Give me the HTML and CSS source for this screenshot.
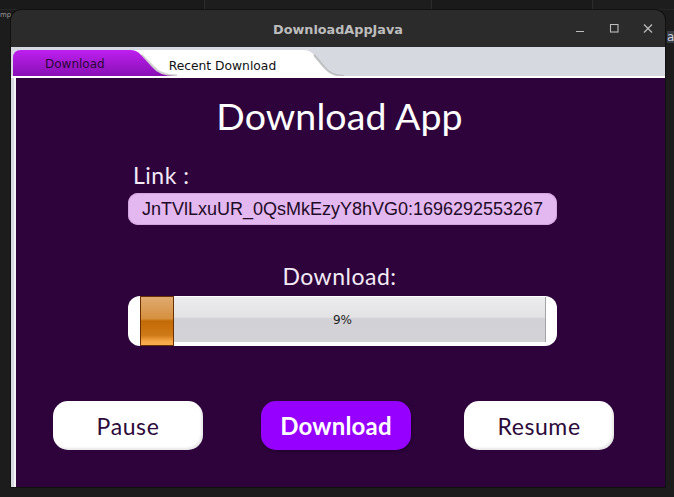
FILE: index.html
```html
<!DOCTYPE html>
<html>
<head>
<meta charset="utf-8">
<link rel="stylesheet" href="styles.css">
</head>
<body>
<div class="topstrip">
  <div class="seg seg1"></div>
  <div class="seg seg2"></div>
  <div class="seg seg3"></div>
  <div class="seg seg4"></div>
</div>
<div class="desk">
  <div class="left-edge"><span class="frag">mp</span></div>
  <div class="window">
    <div class="titlebar">
      <div></div>
      <div class="wtitle">DownloadAppJava</div>
      <div class="controls">
        <div class="ctl"><svg width="10" height="10" viewBox="0 0 10 10"><line x1="1" y1="7.5" x2="9" y2="7.5" stroke="#bdbdbd" stroke-width="1.2"/></svg></div>
        <div class="ctl"><svg width="10" height="10" viewBox="0 0 10 10"><rect x="1.5" y="0.5" width="7.5" height="7.5" fill="none" stroke="#bdbdbd" stroke-width="1.1"/></svg></div>
        <div class="ctl"><svg width="10" height="10" viewBox="0 0 10 10"><path d="M1 0.5 L9 8.5 M9 0.5 L1 8.5" stroke="#bdbdbd" stroke-width="1.2"/></svg></div>
      </div>
    </div>
    <div class="tabbar">
      <svg class="tabshapes" width="654" height="29" viewBox="0 0 654 29">
        <defs>
          <linearGradient id="pg" x1="0" y1="0" x2="0" y2="1">
            <stop offset="0" stop-color="#be1ff0"/>
            <stop offset="1" stop-color="#8810b4"/>
          </linearGradient>
        </defs>
        <path d="M118 29 V3 H292 Q299 3 303 8 L313 20 Q320 29 333 29 Z" fill="#ffffff"/>
        <path d="M303 8 L313 20 Q320 29 333 29" fill="none" stroke="#9e9e9e" stroke-width="2" stroke-opacity="0.55"/>
        <path d="M130 8 L142 20 Q149 29 166 29" fill="none" stroke="#9a9a9a" stroke-width="3" stroke-opacity="0.45"/>
        <path d="M2 29 V11 Q2 3 10 3 H119 Q126 3 130 8 L141 20 Q148 29 164 29 Z" fill="url(#pg)"/>
      </svg>
      <div class="tablabel tab-dl">Download</div>
      <div class="tablabel tab-recent">Recent Download</div>
    </div>
    <div class="sep"></div>
    <div class="content">
      <div class="lb"></div>
      <div class="wb"></div>
      <div class="panel">
        <div class="apptitle">Download App</div>
        <div class="form">
          <div class="label link-label">Link :</div>
          <div class="linkbox">JnTVlLxuUR_0QsMkEzyY8hVG0:1696292553267</div>
          <div class="label dl-label">Download:</div>
          <div class="progress">
            <div class="track">
              <div class="fill" style="width:34px"></div>
              <div class="pct">9%</div>
            </div>
          </div>
        </div>
        <div class="buttons">
          <div class="btn btn-light">Pause</div>
          <div class="btn btn-main">Download</div>
          <div class="btn btn-light btn-resume">Resume</div>
        </div>
      </div>
    </div>
  </div>
  <div class="right-edge"><span class="frag2">a</span></div>
</div>
</body>
</html>
```
FILE: styles.css
```css
html, body {
  margin: 0;
  padding: 0;
}
body {
  width: 674px;
  height: 497px;
  background: #1c1c1c;
  overflow: hidden;
  font-family: "DejaVu Sans", sans-serif;
}
.topstrip {
  height: 10px;
  display: flex;
}
.seg {
  height: 10px;
  box-sizing: border-box;
  border-right: 1px solid #2c2c2c;
  border-bottom: 1px solid #262626;
}
.seg1 { width: 205px; background: #1a1a1a; }
.seg2 { width: 227px; background: #1d1d1d; }
.seg3 { width: 161px; background: #1a1a1a; }
.seg4 { flex: 1; background: #1d1d1d; border-right: none; }
.desk {
  display: flex;
  height: 487px;
}
.left-edge {
  width: 11px;
  overflow: hidden;
  white-space: nowrap;
}
.frag {
  display: block;
  margin-top: 1px;
  font-size: 7px;
  color: #9a9a9a;
}
.right-edge {
  flex: 1;
  overflow: hidden;
  padding-top: 21px;
}
.frag2 {
  display: block;
  margin-left: 2px;
  width: 10px;
  height: 12px;
  background: #3a3d44;
  font-size: 12px;
  line-height: 12px;
  color: #c8d0e0;
}
.window {
  width: 654px;
  height: 477px;
  border-radius: 10px 10px 0 0;
  background: #2b2b2b;
  overflow: hidden;
  display: flex;
  flex-direction: column;
  box-shadow: 0 0 0 1px #111111;
}
.titlebar {
  height: 37px;
  flex: none;
  display: grid;
  grid-template-columns: 1fr auto 1fr;
  align-items: center;
}
.wtitle {
  font-family: "DejaVu Sans", sans-serif;
  font-weight: bold;
  font-size: 12.8px;
  color: #bdbdbd;
  padding-top: 1px;
}
.controls {
  justify-self: end;
  display: flex;
  gap: 10px;
  padding-right: 5px;
}
.ctl {
  width: 24px;
  height: 24px;
  display: flex;
  align-items: center;
  justify-content: center;
}
.tabbar {
  position: relative;
  height: 29px;
  flex: none;
  background: #d6d9e0;
  display: flex;
  align-items: center;
}
.tabshapes {
  position: absolute;
  left: 0;
  top: 0;
}
.tablabel {
  position: relative;
  font-family: "DejaVu Sans", sans-serif;
  font-size: 12px;
}
.tab-dl {
  margin-left: 34px;
  color: #2a0836;
  padding-top: 4px;
}
.tab-recent {
  margin-left: 64px;
  color: #111111;
  padding-top: 8px;
  font-size: 12.3px;
}
.sep {
  height: 2px;
  flex: none;
  background: #ffffff;
}
.content {
  flex: 1;
  display: flex;
}
.lb {
  width: 3px;
  background: #d6d9e0;
}
.wb {
  width: 2px;
  background: #f4f4f6;
}
.panel {
  flex: 1;
  background: #2e033c;
  display: flex;
  flex-direction: column;
}
.apptitle {
  align-self: center;
  margin-top: 19px;
  font-family: Lato, sans-serif;
  font-size: 37.5px;
  line-height: 38px;
  font-weight: 400;
  color: #ffffff;
  letter-spacing: 0.1px;
  padding-right: 2px;
}
.form {
  margin-left: 112px;
  width: 429px;
  display: flex;
  flex-direction: column;
}
.label {
  font-family: Lato, sans-serif;
  font-size: 23px;
  line-height: 24px;
  color: #f3eaf6;
  letter-spacing: 0.5px;
}
.link-label {
  margin-top: 28px;
  padding-left: 5px;
}
.linkbox {
  margin-top: 6px;
  height: 32px;
  line-height: 32px;
  border-radius: 10px;
  background: #e3b7ef;
  text-align: center;
  font-family: "Liberation Sans", Arial, sans-serif;
  font-size: 18px;
  color: #1f0a28;
  box-shadow: inset 0 0 0 1px #d3a4e0;
}
.dl-label {
  margin-top: 39px;
  text-align: center;
  padding-right: 6px;
}
.progress {
  margin-top: 8px;
  height: 50px;
  border-radius: 12px;
  background: #ffffff;
  padding: 1px 11px 4px 12px;
  box-sizing: border-box;
  display: flex;
}
.track {
  flex: 1;
  position: relative;
  background: linear-gradient(#ececee 0%, #e2e2e4 45%, #d2d2d6 48%, #d3d3d7 100%);
  border-right: 1px solid #a4a4a8;
  display: flex;
  align-items: center;
  justify-content: center;
}
.fill {
  position: absolute;
  left: 0;
  top: -1px;
  bottom: -4px;
  box-sizing: border-box;
  border: 1px solid #6b3000;
  background: linear-gradient(#e0aa70 0%, #d69040 45%, #c26a06 50%, #cf7a18 80%, #f6a646 92%, #f9b050 100%);
}
.pct {
  position: relative;
  font-family: "DejaVu Sans", sans-serif;
  font-size: 12px;
  color: #1e1e1e;
  margin-top: 1px;
}
.buttons {
  margin-top: 55px;
  padding-left: 37px;
  display: flex;
}
.btn {
  width: 150px;
  height: 49px;
  border-radius: 15px;
  box-sizing: border-box;
  display: flex;
  align-items: center;
  justify-content: center;
  font-family: Lato, sans-serif;
  font-size: 23px;
  letter-spacing: 0.6px;
}
.btn-light {
  background: #ffffff;
  color: #2c0a3a;
  box-shadow: inset -2px -2px 2px rgba(0, 0, 0, 0.09);
}
.btn-main {
  margin-left: 58px;
  background: #9500ff;
  color: #ffffff;
  font-weight: bold;
  font-size: 24px;
  letter-spacing: 0.2px;
  box-shadow: 1px 2px 3px rgba(0, 0, 0, 0.25);
}
.btn-resume {
  margin-left: 53px;
}
```
